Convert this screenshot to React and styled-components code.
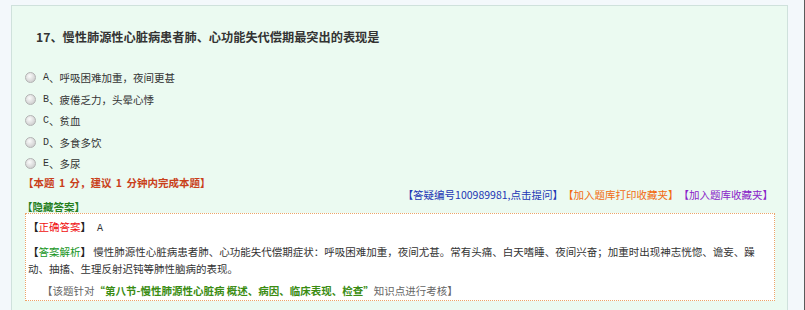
import React from "react";
import styled, { createGlobalStyle } from "styled-components";

const GlobalStyle = createGlobalStyle`
  html, body {
    margin: 0;
    padding: 0;
    background: #f3f8fb;
  }
  body {
    font-family: "Noto Sans CJK SC", "Liberation Sans", sans-serif;
    font-size: 10.5px;
    color: #333;
  }
`;

const Page = styled.div`
  display: flex;
  height: 310px;
  overflow: hidden;
  background: #f3f8fb;
`;

const LeftGutter = styled.div`
  flex: 0 0 11px;
`;

const RightGutter = styled.div`
  flex: 0 0 16px;
  border-right: 1px solid #5a5a5a;
`;

const Panel = styled.div`
  flex: 1 1 auto;
  margin-top: 5px;
  border-top: 1px solid #cfe1dc;
  border-left: 1px solid #cfe1dc;
  border-right: 1px solid #cfe1dc;
  background: #ebfaf1;
  padding: 21px 12px 0 13px;
  display: flex;
  flex-direction: column;
`;

const Title = styled.h3`
  margin: 0 0 20px 11px;
  font-size: 12.2px;
  line-height: 20px;
  font-weight: bold;
  color: #333;
  white-space: nowrap;
`;

const OptionList = styled.div`
  display: flex;
  flex-direction: column;
`;

const OptionRow = styled.label`
  display: flex;
  align-items: center;
  height: 21.5px;
  white-space: nowrap;
`;

const Radio = styled.span`
  width: 9px;
  height: 9px;
  border-radius: 50%;
  border: 1px solid #b3b3b3;
  background: radial-gradient(circle at 40% 35%, #fbfbfb 0%, #dcdcdc 55%, #c2c2c2 100%);
  margin-right: 7px;
`;

const Letter = styled.span`
  font-family: "Liberation Mono", monospace;
  font-size: 10px;
`;

const ScoreLine = styled.div`
  margin: 2px 0 0 -2px;
  height: 12px;
  line-height: 12px;
  color: #c9401a;
  font-weight: bold;
  white-space: pre;
  word-spacing: 2px;
`;

const LinksRow = styled.div`
  display: flex;
  justify-content: flex-end;
  margin-right: 2px;
  height: 12px;
  line-height: 12px;
  white-space: nowrap;
`;

const LinkText = styled.span`
  color: ${(p) => p.$color};
`;

const HiddenLabel = styled.div`
  margin-left: -3px;
  height: 12px;
  line-height: 12px;
  color: #267f1e;
  font-weight: bold;
`;

const AnswerBox = styled.div`
  border: 1px dotted #eca46a;
  background: #fff;
  padding: 4px 4px 1px 2px;
`;

const AnswerLine = styled.div`
  margin: 0 0 ${(p) => p.$gap || 0}px 0;
  line-height: 17px;
  padding-left: ${(p) => p.$indent || 0}px;
`;

const Bracket = styled.span`
  font-weight: bold;
  color: #222;
`;

const Tag = styled.span`
  color: ${(p) => p.$color};
`;

const Mono = styled.span`
  font-family: "Liberation Mono", monospace;
  font-size: 10px;
  margin-left: 6px;
`;

const Note = styled.span`
  color: #666;
`;

const Quoted = styled.span`
  color: #3a8c12;
  font-weight: 600;
`;

const options = [
  ["A", "呼吸困难加重，夜间更甚"],
  ["B", "疲倦乏力，头晕心悸"],
  ["C", "贫血"],
  ["D", "多食多饮"],
  ["E", "多尿"],
];

export default function App() {
  return (
    <>
      <GlobalStyle />
      <Page>
        <LeftGutter />
        <Panel>
          <Title>17、慢性肺源性心脏病患者肺、心功能失代偿期最突出的表现是</Title>
          <OptionList>
            {options.map(([key, text]) => (
              <OptionRow key={key}>
                <Radio />
                <Letter>{key}</Letter>、{text}
              </OptionRow>
            ))}
          </OptionList>
          <ScoreLine>【本题 1 分，建议 1 分钟内完成本题】</ScoreLine>
          <LinksRow>
            <LinkText $color="#2236b4">【答疑编号100989981,点击提问】</LinkText>
            <LinkText $color="#f26a10">【加入题库打印收藏夹】</LinkText>
            <LinkText $color="#8a22c8">【加入题库收藏夹】</LinkText>
          </LinksRow>
          <HiddenLabel>【隐藏答案】</HiddenLabel>
          <AnswerBox>
            <AnswerLine $gap={6}>
              <Bracket>【</Bracket>
              <Tag $color="#f01010">正确答案</Tag>
              <Bracket>】</Bracket>
              <Mono>A</Mono>
            </AnswerLine>
            <AnswerLine $gap={5}>
              <Bracket>【</Bracket>
              <Tag $color="#16951c">答案解析</Tag>
              <Bracket>】</Bracket> 慢性肺源性心脏病患者肺、心功能失代偿期症状：呼吸困难加重，夜间尤甚。常有头痛、白天嗜睡、夜间兴奋；加重时出现神志恍惚、谵妄、躁动、抽搐、生理反射迟钝等肺性脑病的表现。
            </AnswerLine>
            <AnswerLine $indent={14}>
              <Note>【该题针对</Note>
              <Quoted>“第八节-慢性肺源性心脏病 概述、病因、临床表现、检查”</Quoted>
              <Note>知识点进行考核】</Note>
            </AnswerLine>
          </AnswerBox>
        </Panel>
        <RightGutter />
      </Page>
    </>
  );
}
